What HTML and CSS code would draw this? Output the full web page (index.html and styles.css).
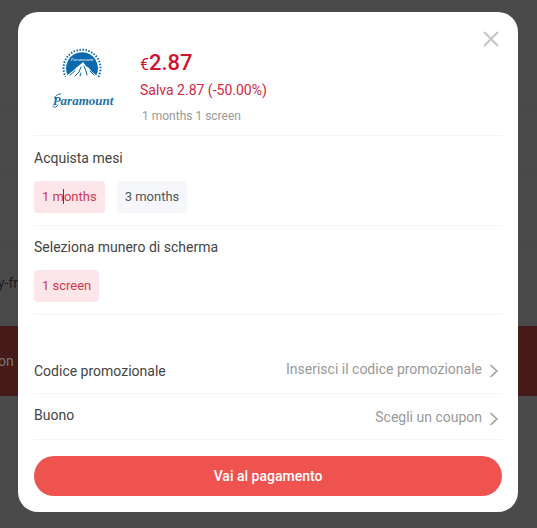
FILE: index.html
```html
<!DOCTYPE html>
<html lang="it">
<head>
  <meta charset="UTF-8" />
  <meta name="viewport" content="width=device-width, initial-scale=1.0"/>
  <title>Paramount</title>
  <link rel="stylesheet" href="styles.css">
</head>
<body>
  <!-- Page behind the dialog -->
  <div class="page" aria-hidden="true">
    <div class="page-head"></div>
    <div class="page-row"></div>
    <div class="page-row"></div>
    <div class="page-row">y-fr</div>
    <div class="page-banner">on r</div>
  </div>

  <div class="overlay">
    <main class="modal" role="dialog" aria-label="Paramount">
      <button class="close-btn" aria-label="Chiudi">
        <svg viewBox="0 0 16 16" width="16" height="16"><path d="M1.5 1.5l13 13M14.5 1.5l-13 13"/></svg>
      </button>

      <!-- Product -->
      <section class="product">
        <div class="product-logo">
          <svg viewBox="0 0 64 64" width="64" height="64" role="img" aria-label="Paramount">
            <path class="logo-stars" d="M16 29.500A18.500 18.500 0 1 1 48 29.500"/>
            <path class="logo-blue" d="M18 28A16 16 0 1 1 46 28z"/>
            <path class="logo-snow" d="M14 30l6-5 4-3 3-3 4-3 2-2 3 4 3 2 3 4 3 2 5 6z"/>
            <path class="logo-rock" d="M31 19l-2 5-4 4M34 18l2 5 1 4M25 23l-5 4M40 23l4 4M31 25l-1 3"/>
            <text class="logo-small" x="32" y="13">Paramount</text>
            <text class="logo-word" x="33" y="57">Paramount</text>
            <path class="logo-swash" d="M11 46C6 46 3 50 6 52M8 57C6 60 3 60 3 58"/>
          </svg>
        </div>
        <div class="product-info">
          <p class="price"><span class="currency">€</span>2.87</p>
          <p class="saving">Salva 2.87 (-50.00%)</p>
          <p class="plan">1 months 1 screen</p>
        </div>
      </section>

      <!-- Options -->
      <section class="option">
        <h2>Acquista mesi</h2>
        <div class="chips">
          <button class="chip active" aria-pressed="true">1 months<span class="caret"></span></button>
          <button class="chip" aria-pressed="false">3 months</button>
        </div>
      </section>
      <section class="option">
        <h2>Seleziona munero di scherma</h2>
        <div class="chips">
          <button class="chip active" aria-pressed="true">1 screen</button>
        </div>
      </section>

      <!-- Promo code and coupon -->
      <section class="discounts">
        <div class="discount-row promo">
          <span id="promo">Codice promozionale</span>
          <button class="pick-btn" aria-describedby="promo">Inserisci il codice promozionale
            <svg viewBox="0 0 8 14" width="8" height="14"><path d="M1 1.500l6 5.500-6 5.500"/></svg>
          </button>
        </div>
        <div class="discount-row coupon">
          <span id="coupon">Buono</span>
          <button class="pick-btn" aria-describedby="coupon">Scegli un coupon
            <svg viewBox="0 0 8 14" width="8" height="14"><path d="M1 1.500l6 5.500-6 5.500"/></svg>
          </button>
        </div>
      </section>

      <button class="pay-btn">Vai al pagamento</button>
    </main>
  </div>
</body>
</html>
```
FILE: styles.css
```css
/* Reset & Base */
* {
  margin: 0;
  padding: 0;
  box-sizing: border-box;
}

body {
  font-family: Roboto, sans-serif;
  font-size: 14px;
  line-height: 20px;
  color: #444;
  background-color: #4a4a4a;
  min-height: 100vh;
}

button {
  font: inherit;
  border: none;
  background: none;
  cursor: pointer;
}

svg {
  fill: none;
  stroke-linecap: round;
  stroke-linejoin: round;
}

/* Page behind */
.page {
  overflow: hidden;
  color: #1c1c1c;
}

.page-head {
  height: 108px;
}

.page-row {
  height: 72px;
  border-top: 1px solid #464646;
  text-indent: -2px;
}

.page-row:nth-child(2) {
  height: 64px;
}

.page-row:nth-child(4) {
  height: 82px;
  padding-top: 28px;
}

.page-banner {
  height: 70px;
  line-height: 70px;
  text-indent: -2px;
  color: #777;
  background-color: #471a1a;
}

/* Dialog */
.overlay {
  position: absolute;
  inset: 0;
  padding: 12px 19px 16px 18px;
}

.modal {
  position: relative;
  padding: 28px 16px 16px;
  border-radius: 20px;
  background-color: #fff;
}

.close-btn {
  position: absolute;
  top: 18px;
  right: 18px;
  width: 18px;
  height: 18px;
}

.close-btn svg {
  display: block;
  margin: auto;
  stroke: #c4c5c7;
  stroke-width: 2;
}

/* Product */
.product {
  display: flex;
  gap: 26px;
  height: 96px;
  padding-left: 16px;
  border-bottom: 1px solid #f5f5f5;
}

.product-logo {
  padding-top: 8px;
}

.product-info {
  color: #d2283f;
}

.price {
  padding-top: 10px;
  font-size: 22px;
  font-weight: 500;
  line-height: 26px;
  color: #cf1430;
}

.currency {
  font-size: 16px;
  font-weight: 400;
}

.saving {
  line-height: 24px;
}

.plan {
  padding-left: 2px;
  font-size: 12px;
  line-height: 28px;
  color: #999;
}

/* Logo */
.logo-blue {
  fill: #0b69b0;
}

.logo-stars {
  stroke: #0b69b0;
  stroke-width: 2;
  stroke-linecap: butt;
  stroke-dasharray: 1.5 1.5;
}

.logo-snow {
  fill: #fff;
}

.logo-rock {
  stroke: #0b69b0;
  stroke-width: 1;
}

.logo-swash {
  stroke: #2271a8;
  stroke-width: 1;
}

.logo-small,
.logo-word {
  font-family: "Liberation Serif", serif;
  font-style: italic;
  text-anchor: middle;
}

.logo-small {
  font-size: 5px;
  fill: #fff;
}

.logo-word {
  font-size: 13px;
  font-weight: bold;
  fill: #2271a8;
}

/* Options */
.option {
  padding: 12px 0;
  border-bottom: 1px solid #f5f5f5;
}

.option + .option {
  padding-top: 11px;
}

.option h2 {
  font-size: 14px;
  font-weight: 400;
  line-height: 20px;
}

.chips {
  display: flex;
  gap: 12px;
  padding-top: 13px;
}

.chip {
  position: relative;
  height: 32px;
  padding: 0 8px;
  border-radius: 4px;
  font-size: 13px;
  color: #555;
  background-color: #f6f7fa;
}

.chip.active {
  color: #d2384f;
  background-color: #fde6e9;
}

.caret {
  position: absolute;
  top: 8px;
  left: 29px;
  width: 1px;
  height: 15px;
  background-color: #c01030;
}

/* Promo code and coupon */
.discounts {
  padding-top: 32px;
}

.discount-row {
  display: flex;
  justify-content: space-between;
  align-items: flex-start;
  height: 46px;
  border-bottom: 1px solid #f5f5f5;
}

.promo {
  height: 47px;
  padding-top: 12px;
}

.promo span {
  line-height: 24px;
}

.coupon {
  padding-top: 11px;
}

.coupon .pick-btn {
  height: 24px;
}

.pick-btn {
  display: flex;
  align-items: center;
  gap: 8px;
  height: 20px;
  padding-right: 4px;
  color: #999;
}

.pick-btn svg {
  margin-top: 4px;
  stroke: #999;
  stroke-width: 1.5;
}

.pay-btn {
  display: block;
  width: 100%;
  height: 40px;
  margin-top: 16px;
  border-radius: 20px;
  font-weight: 500;
  color: #fff;
  background-color: #ef5350;
}
```
